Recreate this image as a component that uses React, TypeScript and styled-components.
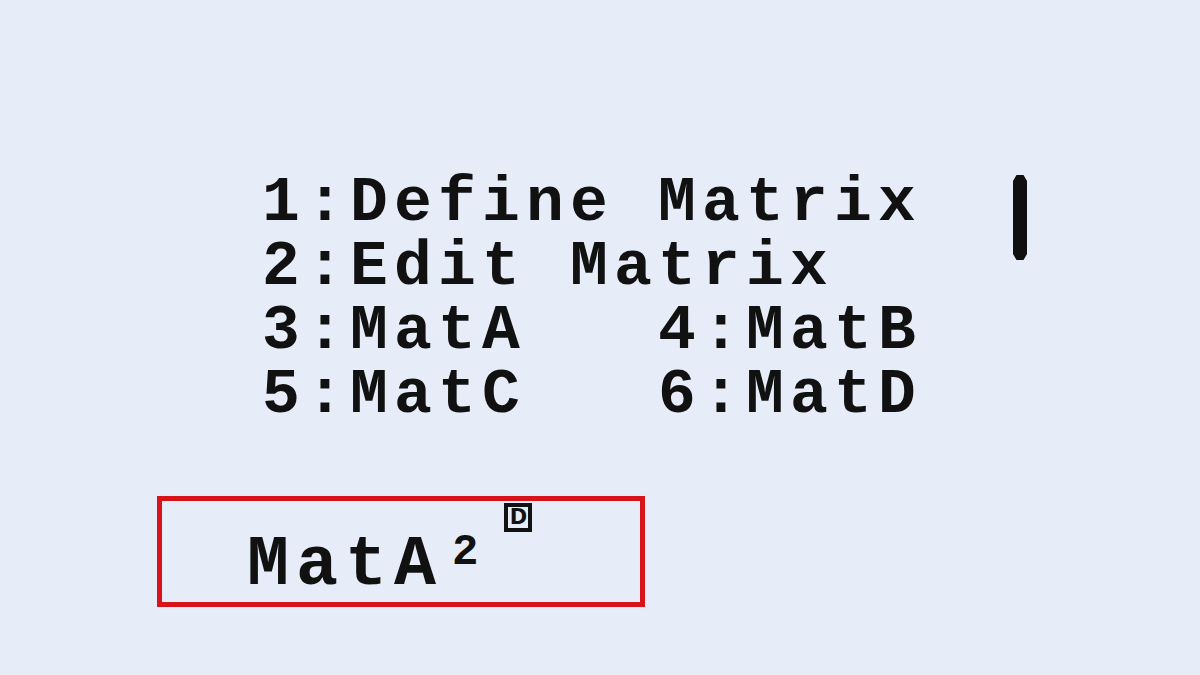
import React from "react";
import styled, { createGlobalStyle } from "styled-components";

const Global = createGlobalStyle`
  html, body {
    margin: 0;
    padding: 0;
    background: #e7edf8;
  }
  body {
    font-family: "Liberation Mono", "DejaVu Sans Mono", monospace;
    color: #121212;
  }
`;

const Screen = styled.div`
  width: 1200px;
  height: 675px;
  box-sizing: border-box;
  background: #e7edf8;
  display: flex;
  flex-direction: column;
  padding-top: 172px;
  overflow: hidden;
`;

const MenuArea = styled.div`
  display: flex;
  align-items: flex-start;
  padding-left: 262px;
  padding-right: 173px;
`;

const Menu = styled.div`
  flex: 1;
  display: flex;
  flex-direction: column;
`;

const MenuLine = styled.div`
  font-family: "Liberation Mono", monospace;
  font-weight: 700;
  font-size: 63px;
  line-height: 64px;
  height: 64px;
  letter-spacing: 6.2px;
  white-space: pre;
  color: #111111;
`;

const ScrollBar = styled.div`
  width: 14px;
  height: 85px;
  margin-top: 3px;
  background: #101010;
  clip-path: polygon(25% 0, 75% 0, 100% 7%, 100% 93%, 75% 100%, 25% 100%, 0 93%, 0 7%);
`;

const InputBox = styled.div`
  margin-top: 68px;
  margin-left: 157px;
  width: 488px;
  height: 111px;
  box-sizing: border-box;
  border: 5px solid #d8141b;
  display: flex;
  align-items: flex-start;
  padding: 2px 0 0 85px;
`;

const Expression = styled.div`
  margin-top: 28px;
  font-family: "Liberation Mono", monospace;
  font-weight: 700;
  font-size: 70px;
  line-height: 70px;
  height: 70px;
  letter-spacing: 7px;
  white-space: pre;
  color: #111111;
`;

const Power = styled.span`
  font-size: 44px;
  line-height: 0;
  letter-spacing: 0;
  margin-left: 9px;
  vertical-align: 20px;
`;

const Indicator = styled.div`
  margin-left: 26px;
  width: 28px;
  height: 29px;
  box-sizing: border-box;
  border: 4px solid #121212;
  display: flex;
  align-items: center;
  justify-content: center;
  font-family: "DejaVu Sans", sans-serif;
  font-weight: 700;
  font-size: 21px;
  line-height: 1;
  color: #121212;
`;

export default function App() {
  return (
    <>
      <Global />
      <Screen>
        <MenuArea>
          <Menu>
            <MenuLine>1:Define Matrix</MenuLine>
            <MenuLine>2:Edit Matrix</MenuLine>
            <MenuLine>{"3:MatA   4:MatB"}</MenuLine>
            <MenuLine>{"5:MatC   6:MatD"}</MenuLine>
          </Menu>
          <ScrollBar />
        </MenuArea>
        <InputBox>
          <Expression>
            MatA<Power>2</Power>
          </Expression>
          <Indicator>D</Indicator>
        </InputBox>
      </Screen>
    </>
  );
}
